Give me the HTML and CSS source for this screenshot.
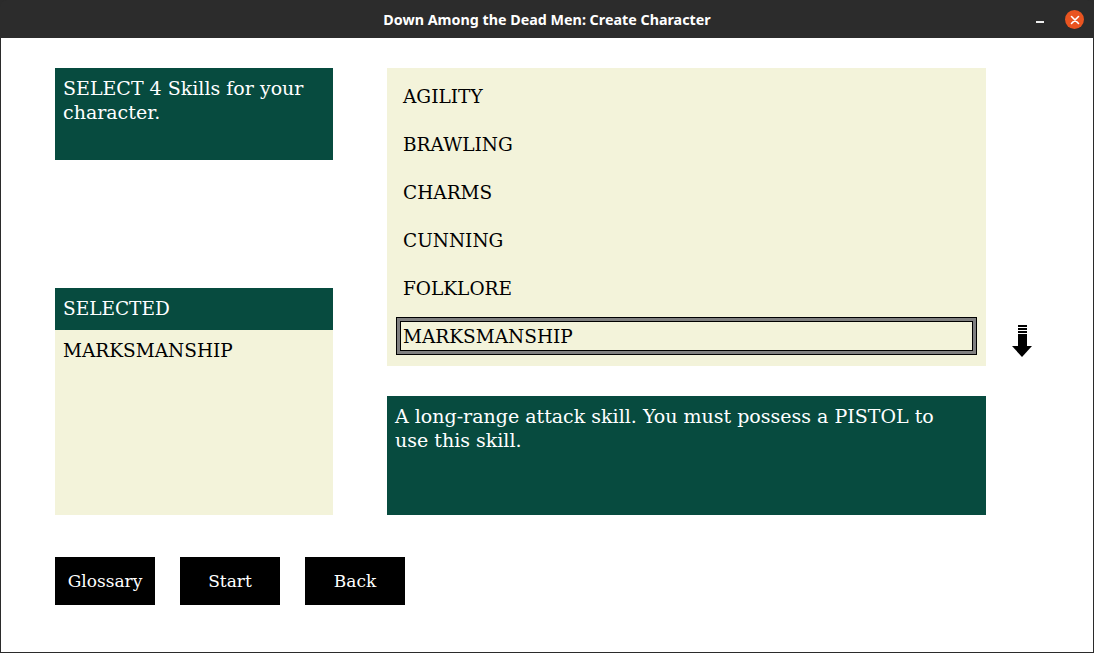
FILE: index.html
```html
<!DOCTYPE html>
<html>
<head>
<meta charset="utf-8">
<title>Down Among the Dead Men: Create Character</title>
<link rel="stylesheet" href="styles.css">
</head>
<body>
<div class="window">
  <header class="titlebar">
    <div class="title">Down Among the Dead Men: Create Character</div>
    <div class="controls">
      <span class="minimize"></span>
      <span class="close">
        <svg width="10" height="10" viewBox="0 0 10 10"><path d="M1.5 1.5 L8.5 8.5 M8.5 1.5 L1.5 8.5" stroke="#fff" stroke-width="1.6" stroke-linecap="round"/></svg>
      </span>
    </div>
  </header>
  <main class="content">
    <div class="panels">
      <div class="left">
        <div class="prompt">SELECT 4 Skills for your character.</div>
        <div class="selected">
          <div class="selected-head">SELECTED</div>
          <div class="selected-body">MARKSMANSHIP</div>
        </div>
      </div>
      <div class="right">
        <div class="list-row">
          <ul class="skills">
            <li class="skill">AGILITY</li>
            <li class="skill">BRAWLING</li>
            <li class="skill">CHARMS</li>
            <li class="skill">CUNNING</li>
            <li class="skill">FOLKLORE</li>
            <li class="skill active">MARKSMANSHIP</li>
          </ul>
          <div class="scroll">
            <svg width="20" height="33" viewBox="0 0 20 33">
              <rect x="6" y="0" width="9" height="2" fill="#000"/>
              <rect x="6" y="3" width="9" height="2" fill="#000"/>
              <rect x="6" y="6" width="9" height="2" fill="#000"/>
              <rect x="6" y="9" width="9" height="13" fill="#000"/>
              <polygon points="0,21 20,21 10,32" fill="#000"/>
            </svg>
          </div>
        </div>
        <div class="description">A long-range attack skill. You must possess a PISTOL to use this skill.</div>
      </div>
    </div>
    <div class="buttons">
      <button class="btn">Glossary</button>
      <button class="btn">Start</button>
      <button class="btn">Back</button>
    </div>
  </main>
</div>
</body>
</html>
```
FILE: styles.css
```css
* { box-sizing: border-box; }
html, body { margin: 0; padding: 0; background: #fff; }
.window {
  width: 1094px;
  height: 653px;
  display: flex;
  flex-direction: column;
  background: #2b2b2b;
}
.titlebar {
  height: 38px;
  flex: none;
  background: #2c2c2c;
  border-radius: 7px 7px 0 0;
  display: flex;
  align-items: center;
  justify-content: center;
  position: relative;
  color: #fff;
}
.title {
  font-family: "Noto Sans", "DejaVu Sans", sans-serif;
  font-weight: 700;
  font-size: 14.3px;
  padding-top: 1px;
}
.controls {
  position: absolute;
  right: 10px;
  top: 10px;
  display: flex;
  align-items: center;
  gap: 21px;
}
.minimize {
  display: block;
  width: 8px;
  height: 2px;
  background: #eee;
  margin-top: 4px;
}
.close {
  width: 19px;
  height: 19px;
  border-radius: 50%;
  background: #e95420;
  display: flex;
  align-items: center;
  justify-content: center;
}
.content {
  flex: 1;
  background: #fff;
  margin: 0 1px 1px 1px;
  padding: 30px 0 0 54px;
  font-family: "DejaVu Serif", serif;
}
.panels {
  display: flex;
  gap: 54px;
}
.left {
  width: 278px;
  display: flex;
  flex-direction: column;
}
.prompt {
  height: 92px;
  background: #074b3f;
  color: #fff;
  font-size: 19px;
  line-height: 24px;
  padding: 8px 8px;
}
.selected {
  margin-top: 128px;
  display: flex;
  flex-direction: column;
}
.selected-head {
  height: 42px;
  background: #074b3f;
  color: #fff;
  font-size: 18.5px;
  line-height: 42px;
  padding: 0 8px;
}
.selected-body {
  height: 185px;
  background: #f3f3da;
  color: #000;
  font-size: 18.5px;
  line-height: 24px;
  padding: 9px 8px;
}
.right {
  display: flex;
  flex-direction: column;
  gap: 30px;
}
.list-row {
  display: flex;
  align-items: flex-start;
}
.skills {
  list-style: none;
  margin: 0;
  padding: 4px 0 6px;
  width: 599px;
  height: 298px;
  background: #f3f3da;
}
.skill {
  height: 38px;
  margin: 5px 9px 10px;
  padding-left: 7px;
  font-size: 18.5px;
  line-height: 40px;
  color: #000;
}
.skill.active {
  border: 1px solid #000;
  box-shadow: inset 0 0 0 3px #808080, inset 0 0 0 4px #000;
  padding-left: 6px;
  line-height: 37px;
}
.scroll {
  margin-top: 257px;
  margin-left: 26px;
}
.scroll svg { display: block; }
.description {
  width: 599px;
  height: 119px;
  background: #074b3f;
  color: #fff;
  font-size: 19px;
  line-height: 24px;
  padding: 8px 30px 8px 8px;
}
.buttons {
  display: flex;
  gap: 25px;
  margin-top: 42px;
}
.btn {
  width: 100px;
  height: 48px;
  background: #000;
  color: #fff;
  border: none;
  font-family: "DejaVu Serif", serif;
  font-size: 17px;
  padding: 0;
}
```
